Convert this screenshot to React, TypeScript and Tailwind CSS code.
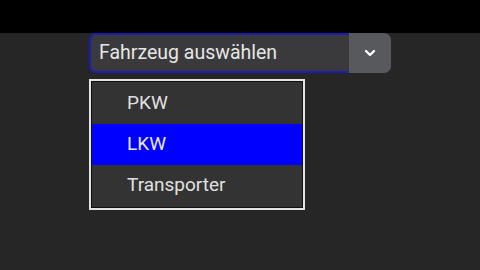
import { ChevronDown } from 'lucide-react'

const options = ['PKW', 'LKW', 'Transporter']

const App = () => {
    return (
        <div className="w-[480px] h-[270px] bg-[#262626] flex flex-col overflow-hidden" style={{ fontFamily: 'Roboto, "Liberation Sans", sans-serif' }}>
            {/* Kopfleiste */}
            <div className="h-[33px] bg-black shrink-0"></div>

            <div className="pl-[89px]">
                {/* Auswahlfeld */}
                <div className="flex w-[302px] h-[40px]">
                    <div className="flex-1 flex items-center pl-[8px] bg-[#3a3a3c] border-2 border-r-0 border-[#1c1cb4] rounded-l-[7px] text-[19.5px] text-[#e6e6e6]">
                        Fahrzeug auswählen
                    </div>
                    <div className="w-[42px] flex items-center justify-center bg-[#58595c] rounded-r-[7px]">
                        <ChevronDown className="w-[16px] h-[16px] text-white" strokeWidth={3.5} />
                    </div>
                </div>

                {/* Liste */}
                <div className="mt-[6px] w-[216px] border-2 border-[#e4e4e4]">
                    <div className="border border-[#111] bg-[#333333] py-[1px]">
                        {options.map((option) => (
                            <div
                                key={option}
                                className={`h-[41px] flex items-center pl-[35px] text-[19px] ${option === 'LKW' ? 'bg-[#0000ff] text-[#e8e8ff]' : 'text-[#e0e0e0]'}`}
                            >
                                {option}
                            </div>
                        ))}
                    </div>
                </div>
            </div>
        </div>
    )
}

export default App
